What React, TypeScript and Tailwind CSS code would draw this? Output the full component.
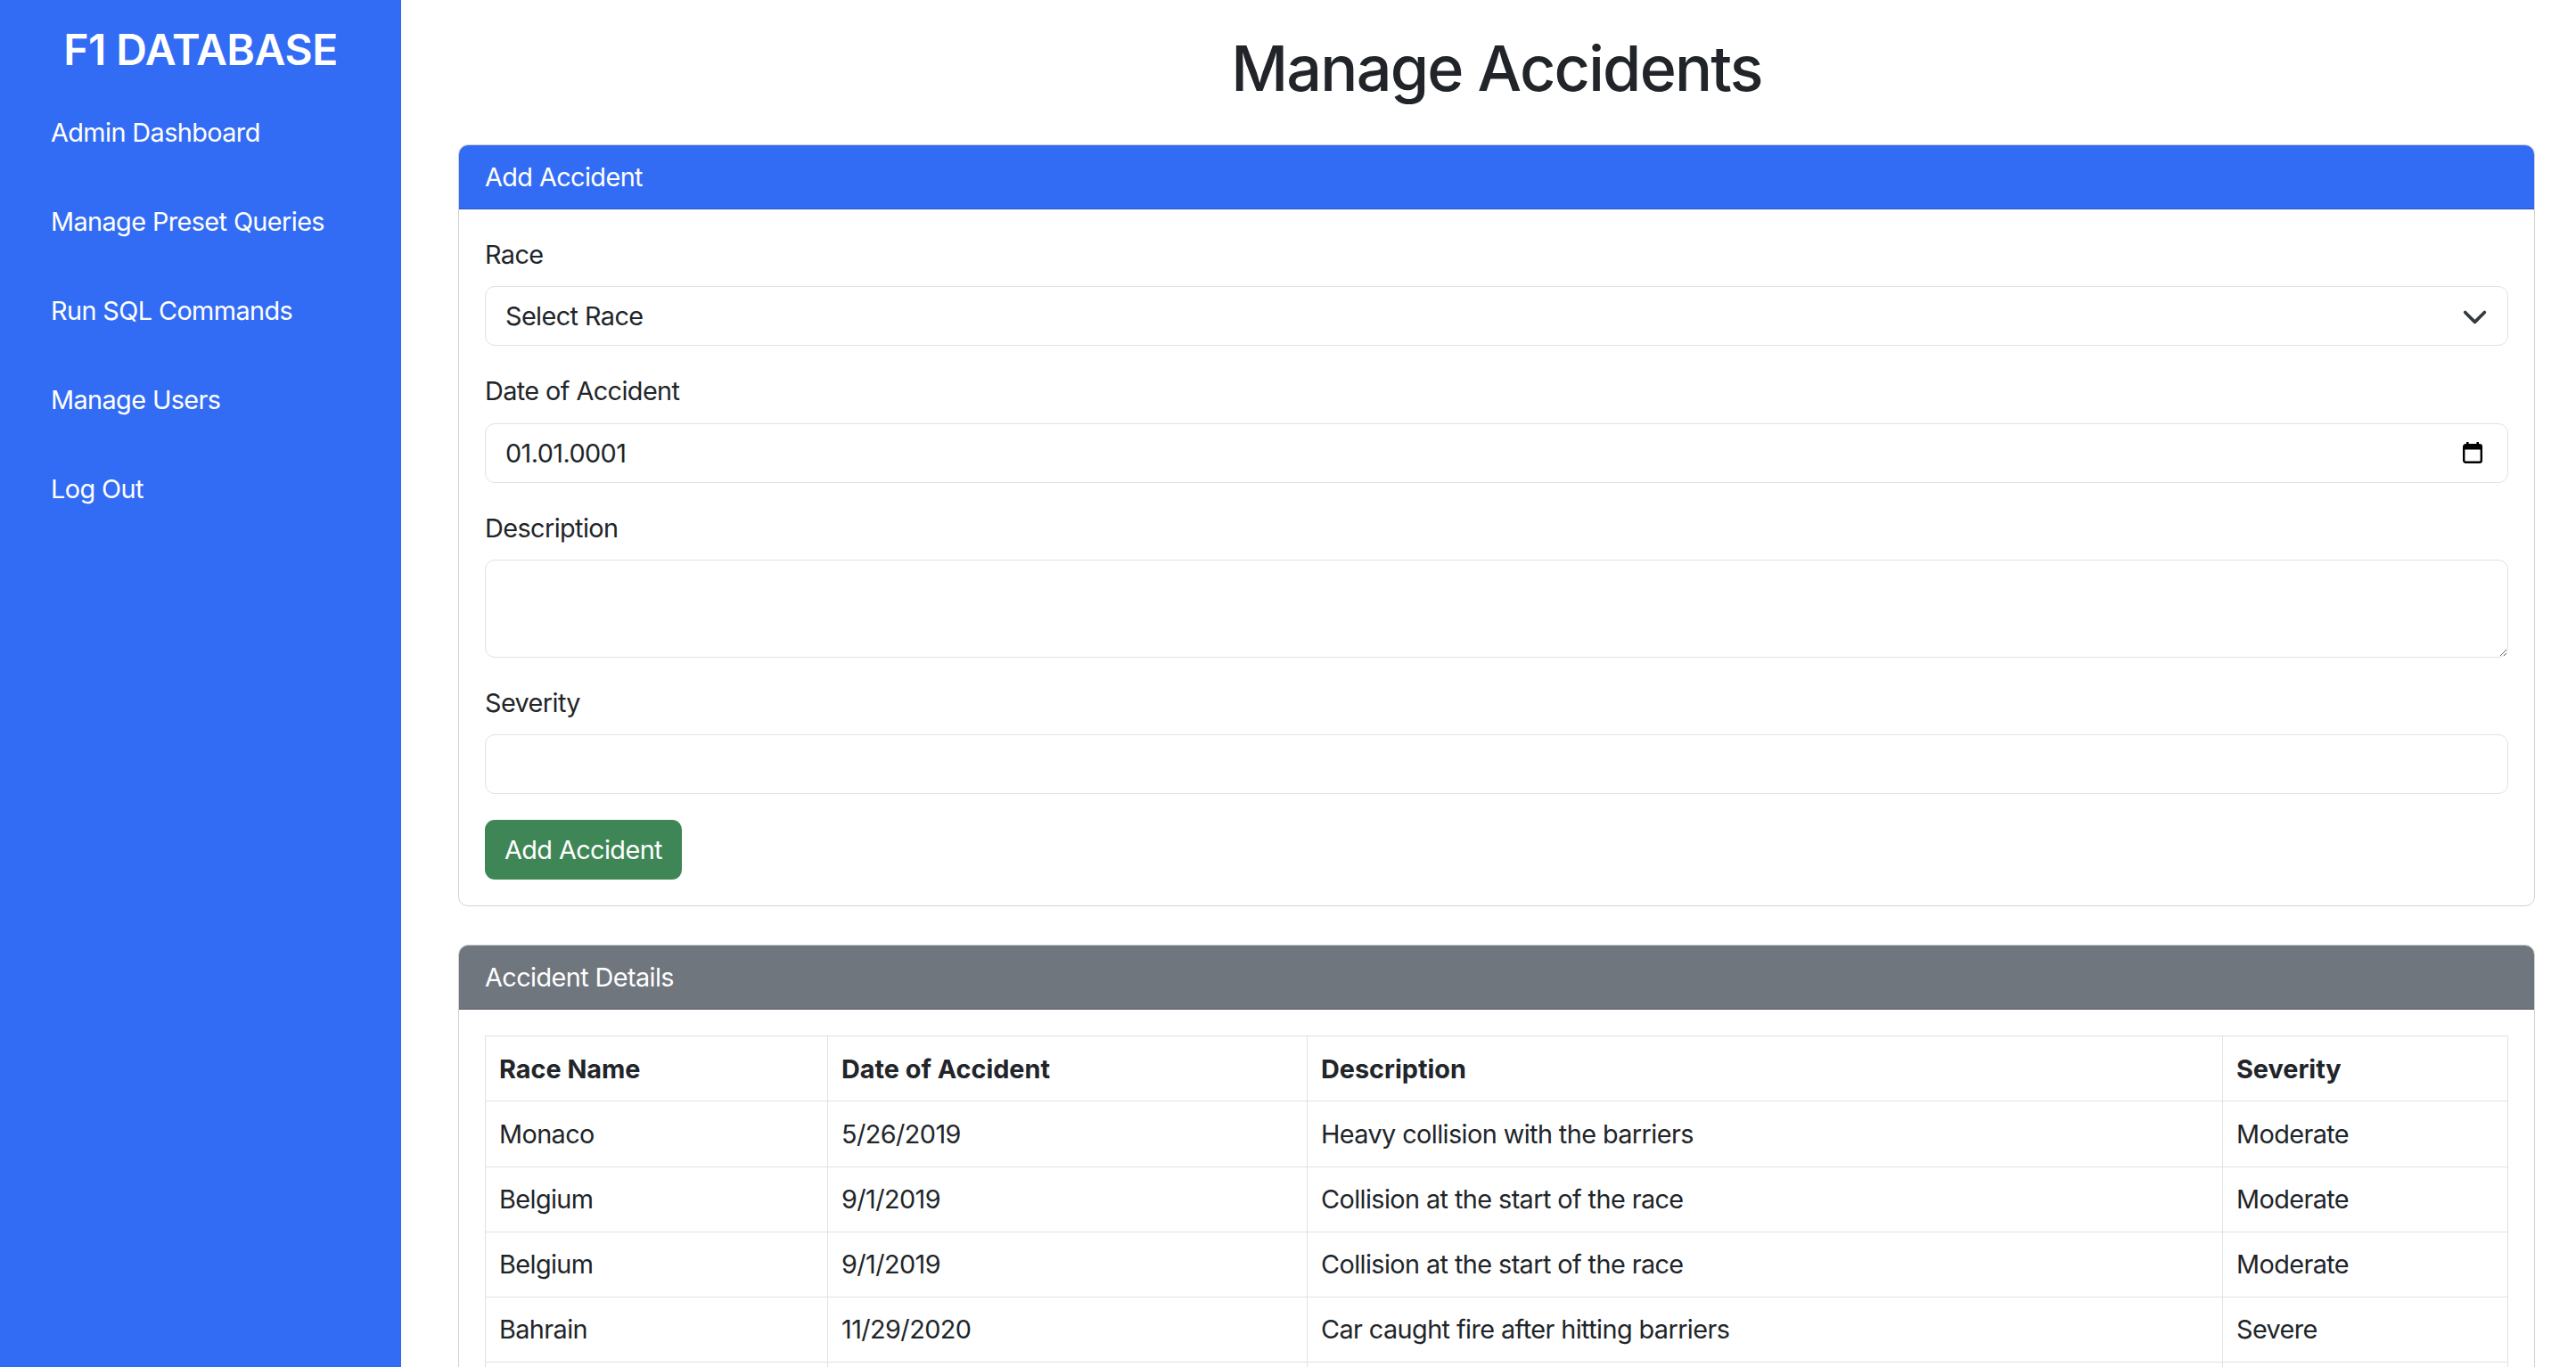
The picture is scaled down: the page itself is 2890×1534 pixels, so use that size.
import { useState } from "react";

const navLinks = [
  "Admin Dashboard",
  "Manage Preset Queries",
  "Run SQL Commands",
  "Manage Users",
  "Log Out",
];

const accidents = [
  { race: "Monaco", date: "5/26/2019", description: "Heavy collision with the barriers", severity: "Moderate" },
  { race: "Belgium", date: "9/1/2019", description: "Collision at the start of the race", severity: "Moderate" },
  { race: "Belgium", date: "9/1/2019", description: "Collision at the start of the race", severity: "Moderate" },
  { race: "Bahrain", date: "11/29/2020", description: "Car caught fire after hitting barriers", severity: "Severe" },
  { race: "Britain", date: "7/18/2021", description: "High speed contact at Copse", severity: "Severe" },
  { race: "Italy", date: "9/12/2021", description: "Cars tangled at the first chicane", severity: "Minor" },
];

function Sidebar() {
  return (
    <aside className="w-[450px] shrink-0 bg-[#336cf4] px-[29px] pb-[29px] pt-[27px] text-white">
      <h3 className="mb-[28px] text-center text-[48px] font-semibold leading-[1.2] tracking-[-0.01em]">F1 DATABASE</h3>
      <nav className="flex flex-col gap-[29px]">
        {navLinks.map((link) => (
          <a key={link} href="#" className="px-[28px] py-[14px] leading-[1.5] text-white">
            {link}
          </a>
        ))}
      </nav>
    </aside>
  );
}

function ChevronDown() {
  return (
    <svg width="29" height="22" viewBox="0 0 16 12" fill="none">
      <path d="M2 3.5l6 6 6-6" stroke="#343a40" strokeWidth="2" strokeLinecap="round" strokeLinejoin="round" />
    </svg>
  );
}

function CalendarIcon() {
  return (
    <svg width="22" height="24" viewBox="0 0 22 24" fill="none">
      <rect x="1.2" y="3.2" width="19.6" height="19.6" rx="2" stroke="#000" strokeWidth="2.4" />
      <rect x="1" y="3" width="20" height="5.5" fill="#000" />
      <rect x="4" y="0" width="2.6" height="4" fill="#000" />
      <rect x="15.4" y="0" width="2.6" height="4" fill="#000" />
    </svg>
  );
}

function Card({ title, headerClass, children }: { title: string; headerClass: string; children: React.ReactNode }) {
  return (
    <div className="overflow-hidden rounded-[11px] border border-[#d2d2d2] bg-white">
      <div className={`border-b border-black/20 px-[29px] py-[14px] leading-[1.5] text-white ${headerClass}`}>
        {title}
      </div>
      <div className="p-[29px]">{children}</div>
    </div>
  );
}

const field =
  "flex h-[67px] w-full items-center rounded-[11px] border border-[#dee2e6] bg-white px-[22px] leading-[1.5] text-[#212529]";

const cell = "border border-[#dee2e6] px-[15px] py-[14.5px] leading-[1.5]";

export default function App() {
  const [severity, setSeverity] = useState("");
  const [description, setDescription] = useState("");

  return (
    <div className="flex min-h-screen bg-white font-['Inter','Liberation_Sans',sans-serif] text-[28.8px] tracking-[-0.02em] text-[#212529]">
      <Sidebar />
      <main className="min-w-0 flex-1 pb-[40px] pl-[64px] pr-[46px] pt-[34px]">
        <h1 className="mb-[42px] text-center text-[70px] font-medium leading-[1.23] tracking-[-0.025em]">Manage Accidents</h1>

        <Card title="Add Accident" headerClass="bg-[#336cf4]">
          <div className="mb-[29px]">
            <label className="mb-[14px] block leading-[1.5]">Race</label>
            <div className={`${field} justify-between`}>
              <span>Select Race</span>
              <ChevronDown />
            </div>
          </div>
          <div className="mb-[29px]">
            <label className="mb-[14px] block leading-[1.5]">Date of Accident</label>
            <div className={`${field} justify-between pr-[28px]`}>
              <span>01.01.0001</span>
              <CalendarIcon />
            </div>
          </div>
          <div className="mb-[29px]">
            <label className="mb-[14px] block leading-[1.5]">Description</label>
            <textarea
              value={description}
              onChange={(e) => setDescription(e.target.value)}
              className="block h-[110px] w-full rounded-[11px] border border-[#dee2e6] px-[22px] py-[11px] leading-[1.5] outline-none"
            />
          </div>
          <div className="mb-[29px]">
            <label className="mb-[14px] block leading-[1.5]">Severity</label>
            <input
              value={severity}
              onChange={(e) => setSeverity(e.target.value)}
              className={`${field} outline-none`}
            />
          </div>
          <button className="h-[67px] rounded-[11px] bg-[#3f8657] px-[22px] leading-[1.5] text-white">
            Add Accident
          </button>
        </Card>

        <div className="mt-[43px]">
          <Card title="Accident Details" headerClass="bg-[#6f767e]">
            <table className="w-full border-collapse border border-[#dee2e6] text-left">
              <thead>
                <tr>
                  <th className={`w-[384px] font-bold tracking-normal ${cell}`}>Race Name</th>
                  <th className={`w-[538px] font-bold tracking-normal ${cell}`}>Date of Accident</th>
                  <th className={`font-bold tracking-normal ${cell}`}>Description</th>
                  <th className={`w-[320px] font-bold tracking-normal ${cell}`}>Severity</th>
                </tr>
              </thead>
              <tbody>
                {accidents.map((a, i) => (
                  <tr key={i}>
                    <td className={cell}>{a.race}</td>
                    <td className={cell}>{a.date}</td>
                    <td className={cell}>{a.description}</td>
                    <td className={cell}>{a.severity}</td>
                  </tr>
                ))}
              </tbody>
            </table>
          </Card>
        </div>
      </main>
    </div>
  );
}
